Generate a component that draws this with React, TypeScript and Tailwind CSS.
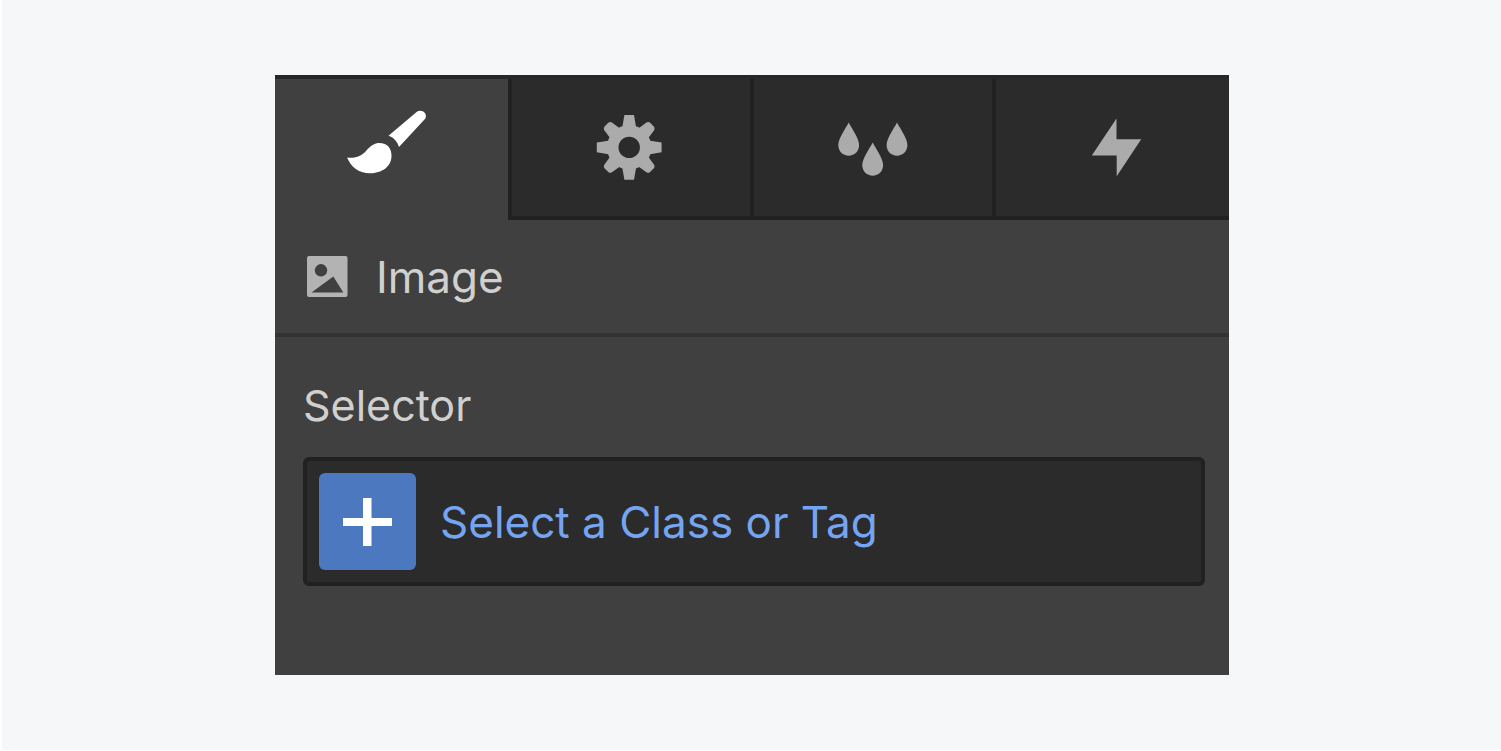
import React, { useState } from "react";

const gearAngles = [0, 45, 90, 135, 180, 225, 270, 315];
const dropOrigins = [
  [24.7, 23.5],
  [48.7, 43.5],
  [73, 23.5],
];

function BrushIcon() {
  return (
    <svg viewBox="0 0 97 97" className="h-[97px] w-[97px] shrink-0 fill-white" aria-hidden="true">
      <path d="M45.5 36.7 L73.6 13 C78 9.6 85 14 82.4 19.4 L56 48 C54.6 43 51 38.5 45.5 36.7 Z" />
      <path d="M4.1 58.5 C12 60 18.7 56.7 23 52 C27.7 46.4 32 44 36.3 44 C44.3 44 48.5 49.3 48.5 56.7 C48.5 67.7 38.7 74.2 27 74.2 C15.3 74.2 7.7 67.7 4.1 58.5 Z" />
    </svg>
  );
}

function GearIcon() {
  return (
    <svg viewBox="0 0 98 97" className="h-[97px] w-[98px] shrink-0" aria-hidden="true">
      <g transform="translate(47.2 48.4)">
        <circle r="16.4" fill="none" stroke="#ababab" strokeWidth="11.4" />
        {gearAngles.map((angle) => (
          <path
            key={angle}
            d={
              angle % 90 === 0
                ? "M-7 -19.5 L-4.8 -32.4 H4.8 L7 -19.5 Z"
                : "M-7 -19.5 L-5.4 -29.8 Q-4.8 -32.2 -2.6 -32.2 H2.6 Q4.8 -32.2 5.4 -29.8 L7 -19.5 Z"
            }
            transform={`rotate(${angle})`}
            fill="#ababab"
          />
        ))}
      </g>
    </svg>
  );
}

function DropsIcon() {
  return (
    <svg viewBox="0 0 98 97" className="h-[97px] w-[98px] shrink-0 fill-[#ababab]" aria-hidden="true">
      {dropOrigins.map(([x, y]) => (
        <path
          key={x}
          d="M0 0 C3 6 10.4 15.6 10.4 22.6 C10.4 29 5.8 33.2 0 33.2 C-5.8 33.2 -10.4 29 -10.4 22.6 C-10.4 15.6 -3 6 0 0 Z"
          transform={`translate(${x} ${y})`}
        />
      ))}
    </svg>
  );
}

function BoltIcon() {
  return (
    <svg viewBox="0 0 97 97" className="h-[97px] w-[97px] shrink-0 fill-[#ababab]" aria-hidden="true">
      <path d="M52.5 19.5 V40.2 H77.2 L52.7 77.2 V56.4 H27.8 Z" />
    </svg>
  );
}

function ImageIcon() {
  return (
    <svg viewBox="0 0 41 41" className="h-[41px] w-[41px] shrink-0" aria-hidden="true">
      <rect width="40.5" height="41" rx="2" fill="#b3b3b3" />
      <circle cx="14" cy="14.3" r="6.2" fill="#404040" />
      <path d="M26.3 20.5 L36.3 36.5 H4.5 Z" fill="#404040" />
    </svg>
  );
}

function PlusIcon() {
  return (
    <svg viewBox="0 0 97 97" className="h-full w-full fill-white" aria-hidden="true">
      <rect x="24" y="45" width="49" height="8" />
      <rect x="44" y="25" width="8.5" height="48" />
    </svg>
  );
}

const tabs = [
  { name: "Style", Icon: BrushIcon },
  { name: "Settings", Icon: GearIcon },
  { name: "Style manager", Icon: DropsIcon },
  { name: "Interactions", Icon: BoltIcon },
];

export default function App() {
  const [active, setActive] = useState("Style");

  return (
    <main className="flex min-h-screen items-center justify-center border-b border-l-2 border-white bg-[#f5f7f9] pl-px font-['Inter',sans-serif] text-[44px] leading-[56px] font-normal text-[#d0d0d0]">
      <section className="w-full max-w-[954px] border-t-4 border-[#272727] bg-[#404040]">
        <div role="tablist" className="grid grid-cols-[233fr_242fr_242fr_237fr]">
          {tabs.map(({ name, Icon }) => (
            <button
              key={name}
              type="button"
              role="tab"
              aria-label={name}
              aria-selected={active === name}
              onClick={() => setActive(name)}
              className={
                active === name
                  ? "flex h-[141px] items-center justify-center border-b-4 border-[#404040] bg-[#404040]"
                  : "flex h-[141px] items-center justify-center border-b-4 border-l-4 border-[#212121] bg-[#2b2b2b]"
              }
            >
              <Icon />
            </button>
          ))}
        </div>
        <header className="flex h-[117px] items-center gap-7 border-b-4 border-[#333333] px-8">
          <ImageIcon />
          <h1>Image</h1>
        </header>
        <div className="flex flex-col gap-6 pt-10 pr-6 pb-[89px] pl-7">
          <label htmlFor="selector" className="self-start text-[43px] leading-[56px]">
            Selector
          </label>
          <div className="flex items-center gap-6 rounded-md border-4 border-[#212121] bg-[#2b2b2b] p-3">
            <button
              type="button"
              aria-label="Add selector"
              className="h-[97px] w-[97px] shrink-0 rounded-md bg-[#4c78bf]"
            >
              <PlusIcon />
            </button>
            <input
              id="selector"
              type="text"
              placeholder="Select a Class or Tag"
              className="h-14 min-w-0 flex-1 bg-transparent text-[#75a5f0] outline-none placeholder:text-[#75a5f0]"
            />
          </div>
        </div>
      </section>
    </main>
  );
}
